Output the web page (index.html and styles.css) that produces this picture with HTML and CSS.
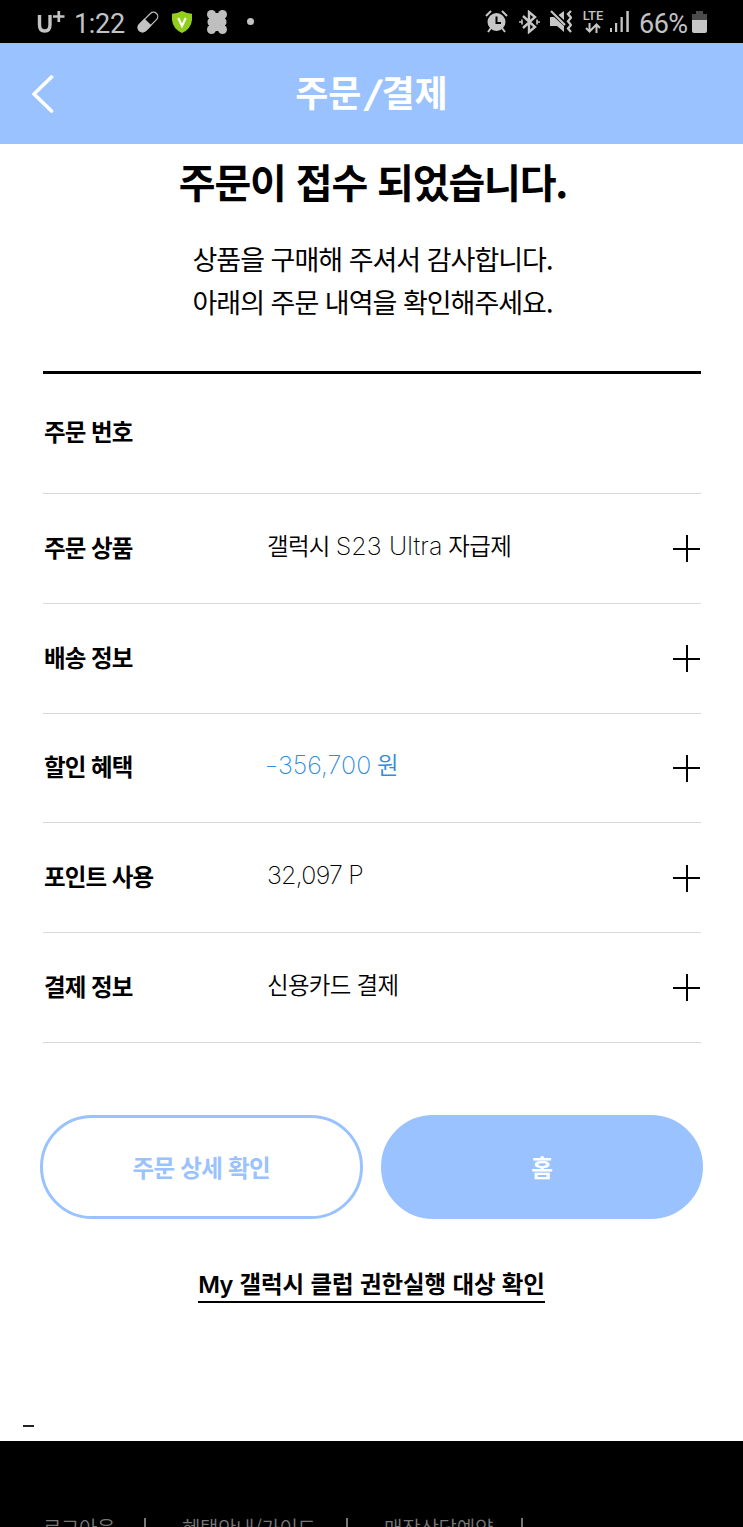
FILE: index.html
```html
<!DOCTYPE html>
<html lang="ko">
<head>
<meta charset="utf-8">
<title>주문/결제</title>
<link rel="stylesheet" href="styles.css">
</head>
<body>
<div class="screen">
  <div class="status">
    <div class="status-left">
      <svg class="carrier" width="28" height="24" viewBox="0 0 28 24" fill="none" stroke="#c3c3c3"><path d="M2.500 5v10q0 6 5.200 6T13 15V5" stroke-width="3.400"/><path d="M16 6.500h11.500M21.800 1v11" stroke-width="2.700"/></svg>
      <span class="clock">1:22</span>
      <svg class="pill" width="22" height="22" viewBox="0 0 22 22"><g transform="rotate(-45 11 11)"><rect x="-1" y="6.700" width="24" height="8.600" rx="4.300" fill="none" stroke="#b9b9b9" stroke-width="1.300"/><path d="M11 6H3.200a5 5 0 0 0 0 10H11z" fill="#c3c3c3"/></g></svg>
      <svg class="shield" width="20" height="22" viewBox="0 0 20 22"><path d="M10 0q5 2.500 10 2.700V9q-1 9-10 13Q1 18 0 9V2.700Q5 2.500 10 0z" fill="#92cf1c"/><path d="M6.300 7l3.700 8 3.700-8" fill="none" stroke="#fff" stroke-width="2.200"/></svg>
      <svg class="clover" width="20" height="24" viewBox="0 0 20 24" fill="#bfbfbf"><rect x="2" y="3" width="16" height="18"/><circle cx="4.500" cy="4.500" r="4.500"/><circle cx="15.500" cy="4.500" r="4.500"/><circle cx="4.500" cy="12" r="4"/><circle cx="15.500" cy="12" r="4"/><circle cx="4.500" cy="19.500" r="4.500"/><circle cx="15.500" cy="19.500" r="4.500"/></svg>
      <i class="dot"></i>
    </div>
    <div class="status-right">
      <svg class="alarm" width="23" height="23" viewBox="0 0 23 23" fill="none" stroke="#c6c6c6"><circle cx="11.500" cy="12" r="9" fill="#c6c6c6" stroke="none"/><path d="M1 6l5-5M22 6l-5-5M6 18l-3 4M17 18l3 4" stroke-width="2"/><path d="M11.500 6.500V13H16" stroke="#000" stroke-width="2"/></svg>
      <svg class="bluetooth" width="21" height="24" viewBox="0 0 21 24" fill="none" stroke="#c6c6c6" stroke-width="2.400"><path d="M4 6l12 11-6 5V2l6 5L4 18"/><path d="M0 12h3M18 12h3M3 9.500v5M18 9.500v5" stroke-width="1.600"/></svg>
      <svg class="mute" width="22" height="23" viewBox="0 0 22 23" fill="#c6c6c6"><path d="M0 7h4l10 9v6l-7-6H0zM8.500 5L14 1v9z"/><path d="M1 1l14 14" stroke="#c6c6c6" stroke-width="2.200"/><path d="M21 1l-3 3 3 3.700-3 3.600 3 3.700-3 3.500 3 3.500" fill="none" stroke="#c6c6c6" stroke-width="2.300"/></svg>
      <div class="lte"><span>LTE</span><svg width="16" height="10" viewBox="0 0 16 10" fill="none" stroke="#c6c6c6" stroke-width="2"><path d="M4.500 0v8M1 5l3.500 3.500L8 5M11.500 10V1.500M8 5l3.500-3.500L15 5"/></svg></div>
      <svg class="signal" width="19" height="21" viewBox="0 0 19 21" fill="#c6c6c6"><path d="M0 17h2v4H0zM5 12h2.200v9H5zM10.500 6h2.300v15h-2.300zM16.300 0h2.500v21h-2.500z"/></svg>
      <span class="percent">66%</span>
      <svg class="battery" width="15" height="22" viewBox="0 0 15 22"><path d="M4 0h7v3h4v6H0V3h4z" fill="#4b4b4b"/><path d="M0 9h15v11q0 2-2 2H2q-2 0-2-2z" fill="#c6c6c6"/></svg>
    </div>
  </div>
  <header class="header">
    <svg class="back" width="22" height="38" viewBox="0 0 22 38" fill="none" stroke="#fff" stroke-width="3.600" stroke-linecap="round" stroke-linejoin="round"><path d="M19.500 2L2 19l17.500 17"/></svg>
    <h1 class="header-title">주문<span class="slash">/</span>결제</h1>
  </header>
  <main class="main">
    <h2 class="title">주문이 접수 되었습니다.</h2>
    <p class="message">상품을 구매해 주셔서 감사합니다.<br>아래의 주문 내역을 확인해주세요.</p>
    <ul class="list">
      <li class="row row-first"><b class="label">주문 번호</b></li>
      <li class="row"><b class="label">주문 상품</b><span class="value">갤럭시 <span class="latin model">S23 Ultra</span> 자급제</span><i class="plus"></i></li>
      <li class="row"><b class="label">배송 정보</b><span class="value"></span><i class="plus"></i></li>
      <li class="row"><b class="label">할인 혜택</b><span class="value discount"><span class="latin amount"><span class="minus">–</span>356,700</span> 원</span><i class="plus"></i></li>
      <li class="row"><b class="label">포인트 사용</b><span class="value"><span class="latin points">32,097 P</span></span><i class="plus"></i></li>
      <li class="row"><b class="label">결제 정보</b><span class="value">신용카드 결제</span><i class="plus"></i></li>
    </ul>
    <div class="actions">
      <button class="button outline">주문 상세 확인</button>
      <button class="button filled">홈</button>
    </div>
    <a class="club"><span class="my">My</span> 갤럭시 클럽 권한실행 대상 확인</a>
    <i class="dash"></i>
  </main>
  <footer class="footer">
    <span class="foot-link logout">로그아웃</span><i class="bar"></i>
    <span class="foot-link guide">혜택안내/가이드</span><i class="bar"></i>
    <span class="foot-link store">매장상담예약</span><i class="bar"></i>
  </footer>
</div>
</body>
</html>
```
FILE: styles.css
```css
* { box-sizing: border-box; }
body { margin: 0; background: #fff; color: #000; font-family: "Noto Sans CJK KR", sans-serif; }
.screen { width: 743px; height: 1527px; overflow: hidden; display: flex; flex-direction: column; white-space: nowrap; }
.status { height: 43px; flex: none; background: #000; color: #c3c3c3; display: flex; justify-content: space-between; padding: 0 36px 0 37px; font-family: Roboto, sans-serif; }
.status-left, .status-right { display: flex; align-items: center; height: 43px; }
.status svg { flex: none; display: block; }
.carrier { margin-top: 1px; }
.clock { font-size: 27px; margin-left: 9px; width: 52px; line-height: 40px; padding-top: 4px; letter-spacing: -.3px; }
.pill { margin-left: 11px; }
.shield { margin-left: 13px; }
.clover { margin-left: 15px; }
.dot { width: 7px; height: 7px; border-radius: 50%; background: #c3c3c3; margin-left: 20px; }
.bluetooth { margin-left: 11px; }
.mute { margin-left: 10px; }
.lte { margin-left: 10px; width: 22px; display: flex; flex-direction: column; align-items: center; font-size: 13px; line-height: 11px; gap: 2px; font-weight: 500; }
.signal { margin-left: 6px; }
.percent { font-size: 27px; margin-left: 10px; width: 49px; line-height: 40px; padding-top: 4px; letter-spacing: -.5px; }
.battery { margin-left: 4px; }
.header { height: 101px; flex: none; background: #99c2ff; color: #fff; display: grid; grid-template-columns: 72px 1fr 72px; align-items: center; }
.back { margin-left: 32px; margin-top: 1px; }
.header-title { margin: -6px 0 0; text-align: center; font-size: 36px; line-height: 50px; font-weight: 700; }
.slash { display: inline-block; width: 20px; font-family: Inter, sans-serif; font-weight: 700; font-size: 36px; line-height: 40px; text-indent: 3px; transform: skewX(-12deg); }
.main { height: 1297px; flex: none; display: flex; flex-direction: column; padding: 8px 43px 0; }
.title { margin: 0 -3px 0 0; text-align: center; font-size: 40px; line-height: 58px; font-weight: 700; letter-spacing: -1.15px; }
.message { margin: 27px -2px 0 0; text-align: center; font-size: 27px; line-height: 43px; font-weight: 400; letter-spacing: -1px; }
.list { list-style: none; margin: 48px -1px 0 0; padding: 0; border-top: 3px solid #000; width: 658px; }
.row { height: 109.75px; border-bottom: 1px solid #d9d9d9; display: flex; align-items: center; font-size: 23.500px; line-height: 36px; }
.row-first { height: 120px; }
.row-first .label { padding-bottom: 6px; }
.label { width: 223px; margin-left: 1px; font-weight: 700; letter-spacing: -.9px; padding-bottom: 3px; }
.value { flex: 1; font-weight: 350; letter-spacing: -.7px; padding-bottom: 7px; }
.latin { font-family: Inter, sans-serif; font-weight: 200; font-size: 25px; line-height: 30px; }
.model { letter-spacing: .1px; }
.amount { letter-spacing: 0; }
.minus { display: inline-block; width: 11px; transform: scaleX(.72); transform-origin: left; }
.points { letter-spacing: -.75px; }
.discount { color: #338cd9; }
.plus { width: 27px; height: 27px; margin-right: 1px; margin-top: 1px; background: linear-gradient(#000, #000) center / 100% 2px no-repeat, linear-gradient(#000, #000) center / 2px 100% no-repeat; }
.actions { display: flex; gap: 18px; margin: 72px -3px 0; width: 663px; }
.button { flex: 1; height: 104px; border-radius: 52px; border: 3px solid #99c2ff; font-family: inherit; font-size: 23.500px; font-weight: 700; letter-spacing: -.7px; padding: 0; }
.outline { background: #fff; color: #99c2ff; }
.filled { background: #99c2ff; color: #fff; }
.club { align-self: center; margin-top: 45px; height: 39px; font-size: 23.500px; line-height: 38px; font-weight: 700; letter-spacing: -.12px; border-bottom: 2px solid #000; }
.my { font-family: Inter, sans-serif; font-weight: 600; letter-spacing: -.4px; }
.dash { width: 11px; height: 2px; background: #222; margin: 122px 0 0 -20px; }
.footer { flex: 1; background: #000; color: #777; display: flex; align-items: flex-start; padding: 73px 0 0 43px; font-size: 20px; line-height: 28px; font-weight: 350; overflow: hidden; }
.foot-link { letter-spacing: -.4px; }
.logout { width: 101px; }
.guide { width: 164px; margin-left: 36px; }
.store { width: 137px; margin-left: 36px; letter-spacing: -.2px; }
.bar { width: 2px; height: 14px; margin-top: 4px; background: #777; flex: none; }
```
